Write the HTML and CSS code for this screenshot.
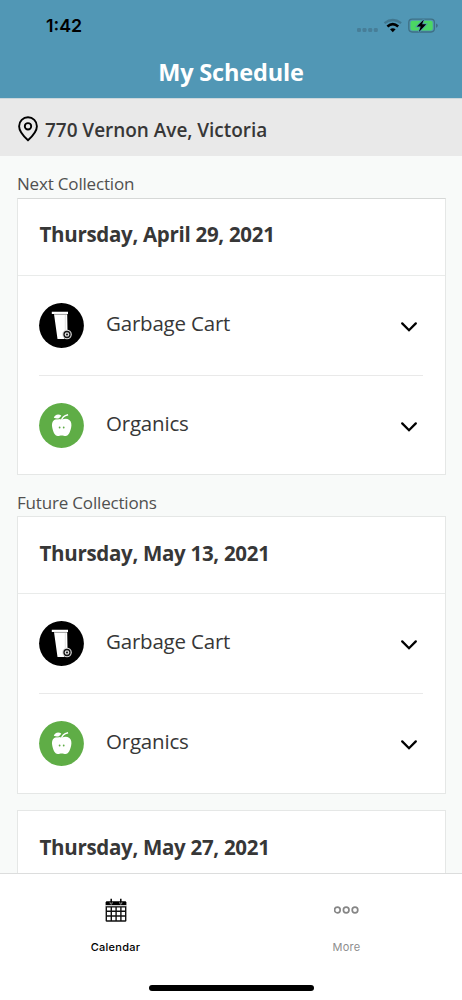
FILE: index.html
```html
<!DOCTYPE html>
<html lang="en">
<head>
<meta charset="utf-8">
<title>My Schedule</title>
<link rel="stylesheet" href="styles.css">
</head>
<body>
<svg class="defs" width="0" height="0" aria-hidden="true">
  <symbol id="cart" viewBox="0 0 45 45">
    <circle cx="22.5" cy="22.5" r="22.4" fill="#000"/>
    <path d="M12.800 8.700h16.200v2.300h-.8l.3 16-3.500 9H18.500L15 11h-2.200z" fill="#fff"/>
    <path d="M15 11.400h13" stroke="#777" stroke-width=".7"/>
    <path d="M26.300 12v16" stroke="#ccc" stroke-width=".6"/>
    <circle cx="28" cy="31.500" r="4.800" fill="#ddd"/>
    <circle cx="28" cy="31.500" r="3" fill="#ddd" stroke="#111" stroke-width="1.300"/>
    <circle cx="28" cy="31.500" r="1" fill="#111"/>
  </symbol>
  <symbol id="apple" viewBox="0 0 45 45">
    <circle cx="22.5" cy="22.5" r="22.4" fill="#5fad46"/>
    <path d="M22.700 16.700c2.800-1.300 5.500-1.300 7.600.2 2 1.500 2.500 4.300 1.900 7.400-.8 4-2.500 8.800-5.600 8.800-1.500 0-2.300-.6-3.900-.6s-2.400.6-3.900.6c-3.100 0-4.900-4.800-5.600-8.800-.6-3.100 0-5.900 2-7.400 2-1.500 4.700-1.500 7.500-.2z" fill="#fff"/>
    <path d="M14.800 14.800c.8-3 4.200-4.400 7.500-2.400-1.300 3-4 4-7.500 2.400z" fill="#fff"/>
    <path d="M22.500 18c.2-3.100 2.200-5.400 6.600-6.300" fill="none" stroke="#fff" stroke-width="1.400"/>
    <path d="M14.800 15.900c3.800 1.100 6.900.2 8.200-2.400" fill="none" stroke="#5fad46" stroke-width=".5"/>
    <circle cx="20.600" cy="24.500" r=".9" fill="#5fad46"/>
    <circle cx="24.700" cy="24.500" r=".9" fill="#5fad46"/>
  </symbol>
  <symbol id="chevron" viewBox="0 0 18 12">
    <path d="M2.200 2.400 9 9.200l6.800-6.800" fill="none" stroke="#000" stroke-width="2.300" stroke-linecap="round"/>
  </symbol>
</svg>
<div class="screen">
  <header class="header">
    <div class="status">
      <span class="time">1:42</span>
      <svg class="status-icons" width="84" height="20" viewBox="0 0 84 20">
        <g fill="#477e98"><rect x="1" y="12" width="4" height="4" rx="1.300"/><rect x="6.500" y="12" width="4" height="4" rx="1.300"/><rect x="12.200" y="12" width="4" height="4" rx="1.300"/><rect x="17.800" y="12" width="4" height="4" rx="1.300"/></g>
        <path d="M28.500 7.200q8.300-6.400 16.600 0" fill="none" stroke="#41778f" stroke-width="2.300"/>
        <path d="M31.400 10.400q5.400-4.700 10.800 0" fill="none" stroke="#000" stroke-width="2.600"/>
        <path d="M34 13.300q2.800-2.200 5.600 0L36.800 16.200z" fill="#000"/>
        <rect x="52.800" y="3.200" width="25.600" height="12.800" rx="3.400" fill="none" stroke="#3f7085" stroke-width="1.300"/>
        <path d="M80 7.400q1.800.4 1.800 2.200T80 11.800z" fill="#3f7085"/>
        <rect x="54.500" y="4.800" width="22.200" height="9.600" rx="2" fill="#4bd763"/>
        <path d="M67.900 3.400 60.800 10.500h3.900l-1.800 5.400 7.300-7.700h-4.100z" fill="#000" stroke="#5197b5" stroke-width="1.600" paint-order="stroke"/>
      </svg>
    </div>
    <h1 class="title">My Schedule</h1>
  </header>
  <div class="address">
    <svg width="20" height="26" viewBox="0 0 20 26" fill="none" stroke="#000" stroke-width="1.900">
      <path d="M10 24.200C6 20.600 1.100 15.700 1.100 10.200a8.900 8.900 0 0 1 17.800 0C18.900 15.700 14 20.600 10 24.200z"/>
      <circle cx="10" cy="10.300" r="3.200"/>
    </svg>
    <span>770 Vernon Ave, Victoria</span>
  </div>
  <main class="content">
    <h2 class="label">Next Collection</h2>
    <section class="card card-first">
      <h3 class="date">Thursday, April 29, 2021</h3>
      <div class="row"><svg class="badge"><use href="#cart"/></svg><span class="name">Garbage Cart</span><svg class="chevron"><use href="#chevron"/></svg></div>
      <div class="row"><svg class="badge"><use href="#apple"/></svg><span class="name">Organics</span><svg class="chevron"><use href="#chevron"/></svg></div>
    </section>
    <h2 class="label">Future Collections</h2>
    <section class="card">
      <h3 class="date">Thursday, May 13, 2021</h3>
      <div class="row"><svg class="badge"><use href="#cart"/></svg><span class="name">Garbage Cart</span><svg class="chevron"><use href="#chevron"/></svg></div>
      <div class="row"><svg class="badge"><use href="#apple"/></svg><span class="name">Organics</span><svg class="chevron"><use href="#chevron"/></svg></div>
    </section>
    <section class="card card-next">
      <h3 class="date">Thursday, May 27, 2021</h3>
    </section>
  </main>
  <nav class="tabs">
    <div class="tab-list">
      <div class="tab tab-active">
        <svg width="24" height="26" viewBox="0 0 24 26">
          <path d="M2.300 4.200h19.400l.7 1.200v3.200H1.600V5.400z" fill="#000"/>
          <path d="M1.600 9h20.800v14.500q0 1.200-1.200 1.200H2.800q-1.200 0-1.200-1.200z" fill="#111"/>
          <g fill="#fff"><path d="M1.600 8.400h20.800v.8H1.600z"/>
          <path d="M3 10.600h3.600v3H3zm5 0h3.400v3H8zm4.800 0h3.400v3h-3.400zm4.800 0h3.400v3h-3.400zM3 15h3.600v3.200H3zm5 0h3.400v3.200H8zm4.800 0h3.400v3.200h-3.400zm4.800 0h3.400v3.200h-3.400zM3 19.800h3.600v3.400H3zm5 0h3.400v3.400H8zm4.800 0h3.400v3.400h-3.400zm4.800 0h3.400v3.400h-3.400z"/></g>
          <path d="M7.200 1.800v4.500M16.800 1.800v4.500" stroke="#000" stroke-width="1.500"/>
          <path d="M6.100 5.200q-.1 2 1.100 2t1.100-2m7.400 0q-.1 2 1.100 2t1.100-2" fill="none" stroke="#bbb" stroke-width=".8"/>
        </svg>
        <span>Calendar</span>
      </div>
      <div class="tab">
        <svg width="26" height="26" viewBox="0 0 26 26" fill="none" stroke="#868686" stroke-width="1.700"><circle cx="3.400" cy="13" r="2.800"/><circle cx="12.200" cy="13" r="2.800"/><circle cx="21" cy="13" r="2.800"/></svg>
        <span>More</span>
      </div>
    </div>
    <div class="home"></div>
  </nav>
</div>
</body>
</html>
```

FILE: styles.css
```css
* { box-sizing: border-box; }
body { margin: 0; font-family: "Open Sans", "Noto Sans", sans-serif; color: #373737; }
h1, h2, h3 { margin: 0; }
svg { display: block; flex: none; }
.defs { position: absolute; }
.screen { display: flex; flex-direction: column; width: 462px; height: 1000px; overflow: hidden; background: #f8faf9; }
.header { height: 98px; flex: none; background: #5197b5; }
.status { display: flex; justify-content: space-between; align-items: center; height: 52px; padding: 0 23px 0 46px; }
.time { font: 600 17.8px/20px Inter, sans-serif; color: #000; }
.status-icons { width: 84px; margin-right: -1px; }
.title { color: #fff; font-size: 23.5px; line-height: 40px; font-weight: 700; text-align: center; letter-spacing: -.15px; }
.address { display: flex; align-items: center; gap: 7px; flex: none; height: 58px; padding: 4px 17px 0 18px; background: #e9e9e9; border-top: 1px solid #cbd6db; font-size: 19px; font-weight: 560; letter-spacing: -.04px; }
.address svg { margin-top: -2px; }
.content { flex: 1; min-height: 0; overflow: hidden; padding: 16px 16.5px 0 17px; }
.label { height: 25px; font-size: 17px; line-height: 24px; font-weight: 400; letter-spacing: -.18px; color: #505050; }
.card { height: 278px; border: 1px solid #e5e7e6; background: #fff; }
.card-first { height: 277px; border-top-color: #d6d8d7; margin: 1px 0 16px; }
.card-next { margin-top: 16px; }
.date { height: 77px; padding-left: 21.5px; border-bottom: 1px solid #e9ebea; font-size: 20.5px; line-height: 73px; font-weight: 700; letter-spacing: -.3px; }
.card-first .date { line-height: 71px; }
.row { display: flex; align-items: center; height: 99px; margin: 0 22px 0 21px; }
.row + .row { height: 100px; border-top: 1px solid #e9e9e9; }
.badge { width: 45px; height: 45px; }
.name { flex: 1; padding: 0 0 5px 22px; font-size: 20.5px; letter-spacing: -.2px; }
.chevron { width: 18px; height: 12px; margin: 2px 5px 0 0; }
.tabs { height: 127px; flex: none; background: #fff; border-top: 1px solid #dcdddd; }
.tab-list { display: flex; padding-top: 23px; }
.tab { flex: 1; display: flex; flex-direction: column; align-items: center; gap: 16px; color: #8e8e8e; font: 400 11px/16px Inter, sans-serif; letter-spacing: .25px; }
.tab-active { color: #000; font-weight: 500; }
.home { width: 165px; height: 6px; margin: 30px auto 0; border-radius: 3px; background: #000; }
```
